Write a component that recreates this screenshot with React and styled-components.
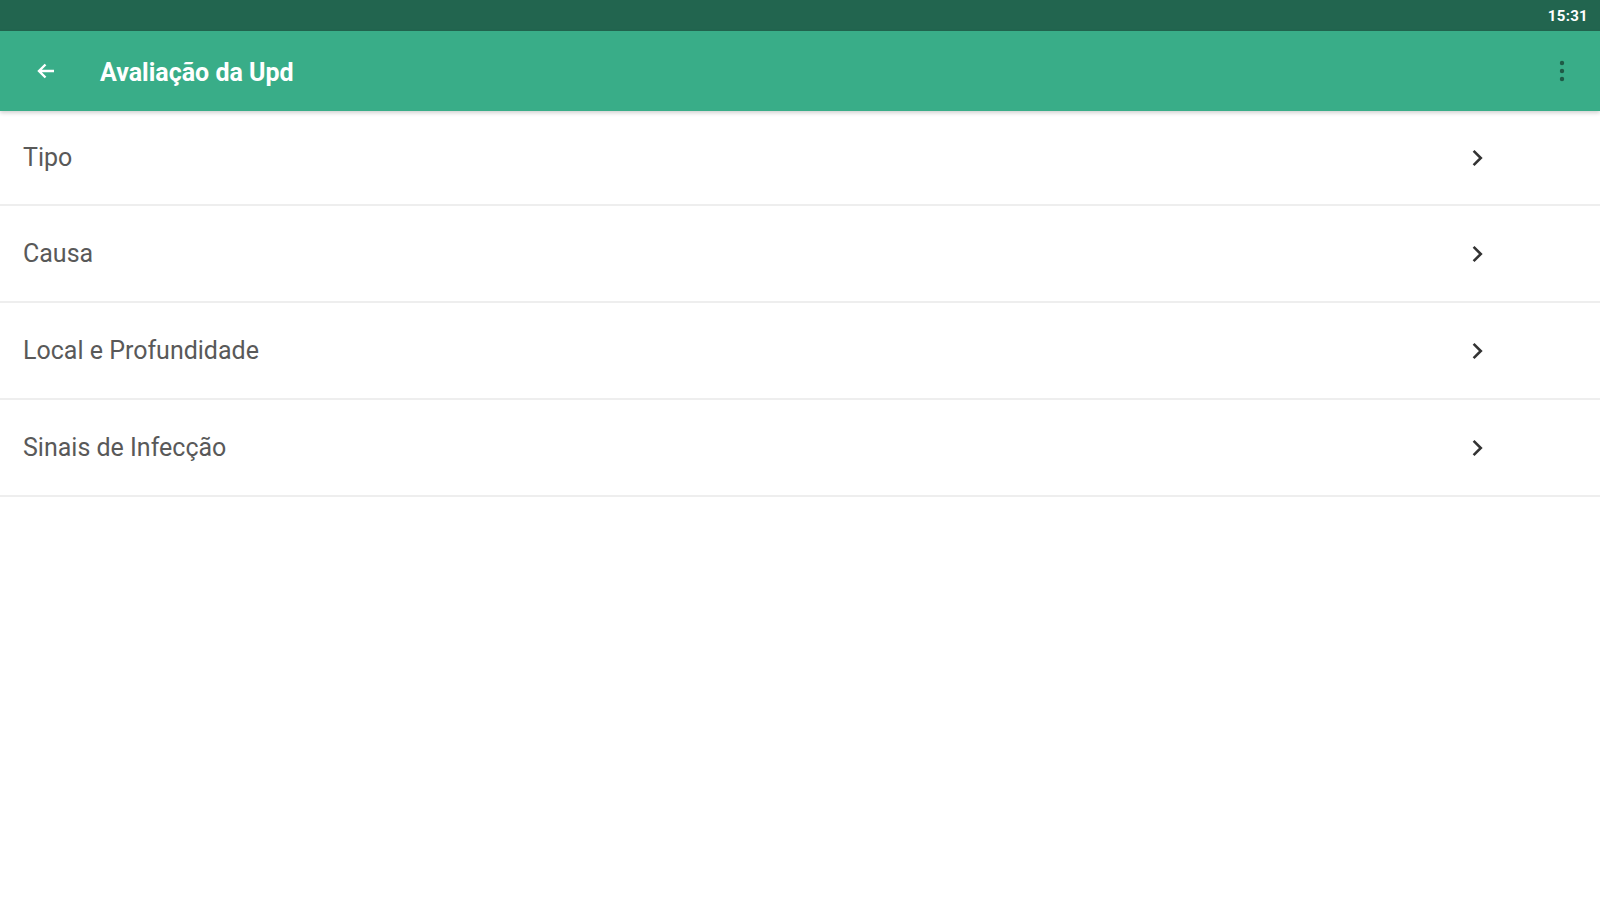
import React from "react";
import styled, { createGlobalStyle } from "styled-components";

const Global = createGlobalStyle`
  html, body { margin: 0; padding: 0; background: #ffffff; }
  body { font-family: Roboto, "Liberation Sans", sans-serif; }
`;

const Screen = styled.div`
  width: 1600px;
  height: 900px;
  display: flex;
  flex-direction: column;
  background: #ffffff;
  overflow: hidden;
`;

const StatusBar = styled.div`
  height: 31px;
  background: #22654f;
  display: flex;
  justify-content: flex-end;
  align-items: center;
  padding: 0 12px;
`;

const Clock = styled.span`
  color: #ffffff;
  font-family: Roboto, "Liberation Sans", sans-serif;
  font-weight: 700;
  font-size: 15px;
  letter-spacing: 0.3px;
`;

const AppBar = styled.div`
  height: 80px;
  background: #39ad88;
  display: flex;
  align-items: center;
  padding: 0 24px 0 32px;
  box-shadow: 0 2px 4px rgba(0, 0, 0, 0.18);
  position: relative;
  z-index: 1;
`;

const IconButton = styled.div`
  width: 28px;
  height: 28px;
  display: flex;
  align-items: center;
  justify-content: center;
`;

const Title = styled.h1`
  margin: 2px 0 0 40px;
  flex: 1;
  color: #ffffff;
  font-family: Roboto, "Liberation Sans", sans-serif;
  font-weight: 700;
  font-size: 25px;
`;

const List = styled.div`
  display: flex;
  flex-direction: column;
`;

const Row = styled.div`
  box-sizing: border-box;
  height: ${(p) => (p.$first ? 95 : 97)}px;
  display: flex;
  align-items: center;
  justify-content: space-between;
  padding: 0 111px 0 23px;
  border-bottom: 2px solid #eeeeee;
`;

const Label = styled.span`
  color: #595959;
  font-family: Roboto, "Liberation Sans", sans-serif;
  font-size: 25px;
`;

const Chevron = () => (
  <svg width="24" height="24" viewBox="0 0 24 24">
    <path d="M8.6 4.8 L15.8 12 L8.6 19.2" fill="none" stroke="#333333" strokeWidth="2.6" />
  </svg>
);

const BackArrow = () => (
  <svg width="24" height="24" viewBox="0 0 24 24">
    <path d="M20 12 H5 M11.5 5.5 L5 12 L11.5 18.5" fill="none" stroke="#ffffff" strokeWidth="2.4" />
  </svg>
);

const MoreDots = () => (
  <svg width="6" height="22" viewBox="0 0 6 22">
    <circle cx="3" cy="3" r="2.2" fill="#1f5a46" />
    <circle cx="3" cy="11" r="2.2" fill="#1f5a46" />
    <circle cx="3" cy="19" r="2.2" fill="#1f5a46" />
  </svg>
);

const items = ["Tipo", "Causa", "Local e Profundidade", "Sinais de Infecção"];

export default function App() {
  return (
    <Screen>
      <Global />
      <StatusBar>
        <Clock>15:31</Clock>
      </StatusBar>
      <AppBar>
        <IconButton>
          <BackArrow />
        </IconButton>
        <Title>Avaliação da Upd</Title>
        <IconButton>
          <MoreDots />
        </IconButton>
      </AppBar>
      <List>
        {items.map((t, i) => (
          <Row key={t} $first={i === 0}>
            <Label>{t}</Label>
            <Chevron />
          </Row>
        ))}
      </List>
    </Screen>
  );
}
